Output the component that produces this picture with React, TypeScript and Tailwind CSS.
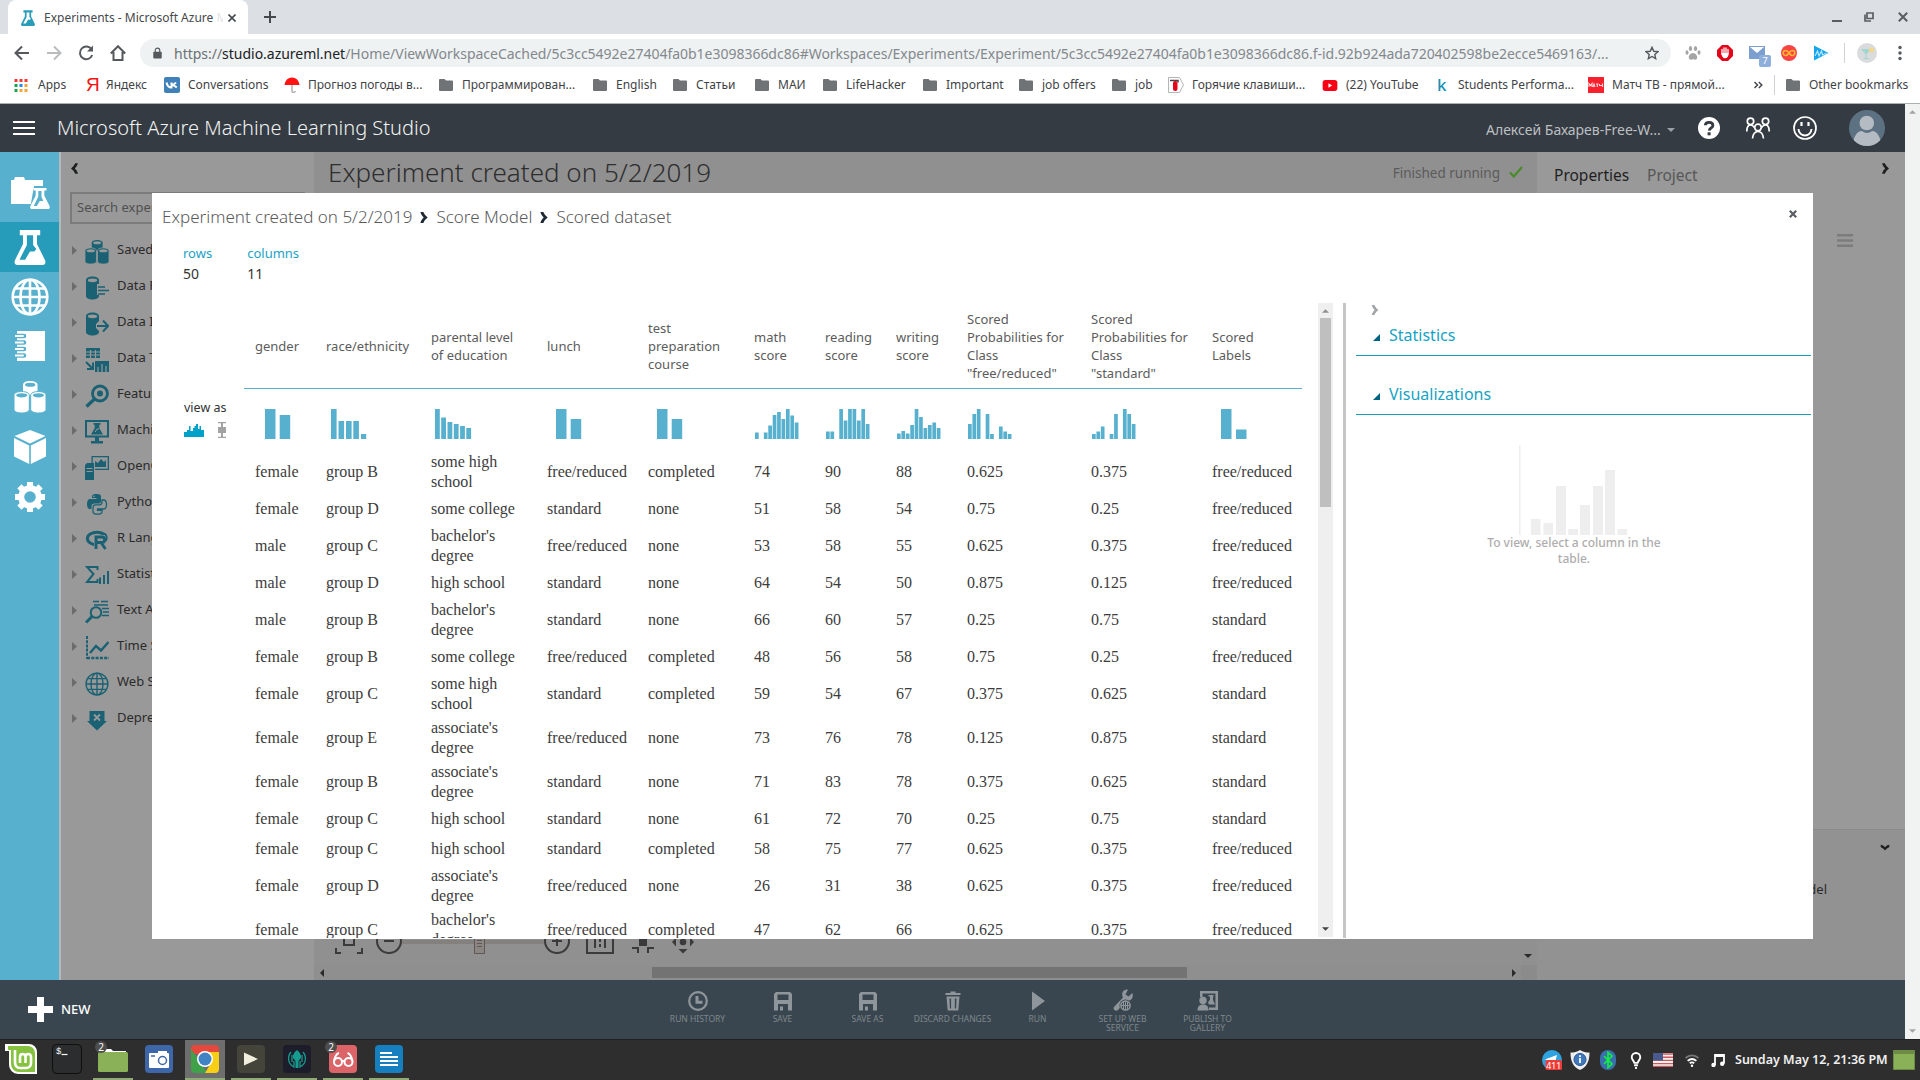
import type { ReactNode } from 'react';

const UI = "font-['Noto_Sans','Open_Sans',sans-serif]";

type P = { className?: string };

/* ---------- shared glyphs ---------- */

const Flask = ({ className = '' }: P) => (
  <svg viewBox="0 0 32 36" className={className} fill="currentColor">
    <path
      fillRule="evenodd"
      d="M5.5 0h21v5.5h-3.300v9L31.500 31c1 2.600 0 5-2.600 5H3.100C.5 36-.5 33.600.5 31L8.800 14.500v-9H5.500zM12.800 5.500v10L5.200 30.500h5.800l5-8.500h4.500l2-2.500-3.300-4v-10z"
    />
  </svg>
);

const Folder = ({ className = '' }: P) => (
  <svg viewBox="0 0 14 12" className={className} fill="currentColor">
    <path d="M1 0h4.500L7 1.500h6a1 1 0 0 1 1 1V11a1 1 0 0 1-1 1H1a1 1 0 0 1-1-1V1a1 1 0 0 1 1-1z" />
  </svg>
);

const Globe = ({ className = '', sw = 2.4 }: P & { sw?: number }) => (
  <svg viewBox="0 0 38 38" className={className} fill="none" stroke="currentColor" strokeWidth={sw}>
    <circle cx="19" cy="19" r="17.300" />
    <ellipse cx="19" cy="19" rx="9.500" ry="17.300" />
    <path d="M19 2v34M2 19h34M5 10.500h28M5 27.500h28" />
  </svg>
);

const Cylinders = ({ className = '', gap }: P & { gap: string }) => (
  <svg viewBox="0 0 32 32" className={className} fill="currentColor">
    <path d="M9 3.500C9 1.600 12 0 16 0s7.500 1.600 7.500 3.500V15H9z" />
    <ellipse cx="16.200" cy="3.800" rx="5.200" ry="2" fill={gap} />
    <path d="M0 14c0-2 3.500-3.500 7.700-3.500s7.600 1.500 7.600 3.500v14.500c0 2-3.400 3.500-7.600 3.500S0 30.500 0 28.500z" stroke={gap} strokeWidth="1" />
    <path d="M16.700 14c0-2 3.500-3.500 7.700-3.500S32 12 32 14v14.500c0 2-3.400 3.500-7.600 3.500s-7.700-1.500-7.700-3.500z" stroke={gap} strokeWidth="1" />
    <ellipse cx="7.700" cy="14.300" rx="5.600" ry="2.100" fill={gap} />
    <ellipse cx="24.400" cy="14.300" rx="5.600" ry="2.100" fill={gap} />
  </svg>
);

const Angle = ({ className = '' }: P) => (
  <svg viewBox="0 0 8 12" className={className} fill="currentColor">
    <path d="M0 0h3.200Q5 4 8 6 5 8 3.200 12H0q1.200-4 3.600-6Q1.200 4 0 0z" />
  </svg>
);

/* ---------- browser chrome ---------- */

const TabStrip = () => (
  <div className="flex h-[34px] shrink-0 bg-[#dcdfe4] pl-2">
    <div className="flex w-[240px] items-center rounded-t-lg bg-white pt-px">
      <Flask className="ml-[13px] h-[16px] w-[14px] text-[#2a9db8]" />
      <div className="relative ml-[9px] w-[179px] overflow-hidden text-[12px] whitespace-nowrap text-[#45494d]">
        Experiments - Microsoft Azure <span className="text-[#e3e4e5]">M</span>
      </div>
      <svg viewBox="0 0 8 8" className="ml-[5px] h-2 w-2" stroke="#45494d" strokeWidth="1.600">
        <path d="M.5.5l7 7M7.500.5l-7 7" />
      </svg>
    </div>
    <svg viewBox="0 0 12 12" className="mt-[11px] ml-[16px] h-3 w-3" stroke="#45494d" strokeWidth="2">
      <path d="M6 0v12M0 6h12" />
    </svg>
    <div className="ml-auto flex items-center gap-[22px] pr-[12px]">
      <svg viewBox="0 0 10 10" className="h-[10px] w-[10px]" stroke="#5a5e62" strokeWidth="2">
        <path d="M0 9h10" />
      </svg>
      <svg viewBox="0 0 10 10" className="h-[10px] w-[10px]" fill="none" stroke="#5a5e62" strokeWidth="1.700">
        <path d="M3 1h6v5.500H3zM1 2.500V9h6" />
      </svg>
      <svg viewBox="0 0 10 10" className="ml-[2px] h-[10px] w-[10px]" stroke="#5a5e62" strokeWidth="2">
        <path d="M.8.8l8.400 8.400M9.200.8L.8 9.200" />
      </svg>
    </div>
  </div>
);

const AddressBar = () => (
  <div className="flex h-[38px] shrink-0 items-center bg-white text-[#5f6368]">
    <svg viewBox="0 0 16 16" className="ml-[14px] h-4 w-4" fill="none" stroke="#55595d" strokeWidth="2">
      <path d="M15 8H2M8 1.500L1.500 8 8 14.500" />
    </svg>
    <svg viewBox="0 0 16 16" className="ml-[16px] h-4 w-4" fill="none" stroke="#b9bbbd" strokeWidth="2">
      <path d="M1 8h13M8 1.500L14.500 8 8 14.500" />
    </svg>
    <svg viewBox="0 0 16 16" className="ml-[16px] h-4 w-4" fill="none" stroke="#55595d" strokeWidth="2">
      <path d="M13.600 4.500A6.300 6.300 0 1 0 14.200 10" />
      <path d="M15 0.500v6H9z" fill="#55595d" stroke="none" />
    </svg>
    <svg viewBox="0 0 16 16" className="ml-[16px] h-4 w-4" fill="none" stroke="#55595d" strokeWidth="2">
      <path d="M.8 8.500L8 1.200l7.200 7.300M3.500 7v8h9V7" />
    </svg>
    <div className="ml-[14px] flex h-7 w-[1531px] items-center rounded-full bg-[#eef2f3] pl-[13px]">
      <svg viewBox="0 0 10 12" className="h-[12px] w-[9px]">
        <path d="M2.500 5V3a2.500 2.500 0 0 1 5 0v2" fill="none" stroke="#55595d" strokeWidth="1.300" />
        <rect x=".3" y="4.500" width="9.400" height="7.500" rx="1" fill="#55595d" />
      </svg>
      <div className="ml-[12px] w-[1458px] text-[14px] tracking-[-0.02px] whitespace-nowrap text-[#84888c]">
        <span className="text-[#6c7074]">https://</span>
        <span className="text-[#202124]">studio.azureml.net</span>
        /Home/ViewWorkspaceCached/5c3cc5492e27404fa0b1e3098366dc86#Workspaces/Experiments/Experiment/5c3cc5492e27404fa0b1e3098366dc86.f-id.92b924ada720402598be2ecce5469163/...
      </div>
      <svg viewBox="0 0 16 16" className="ml-[13px] h-[14px] w-[14px]" fill="none" stroke="#55595d" strokeWidth="1.600">
        <path d="M8 1.500l2 4.500 4.800.5-3.600 3.200 1 4.800L8 12l-4.200 2.500 1-4.800L1.200 6.500 6 6z" />
      </svg>
    </div>
    <svg viewBox="0 0 16 16" className="ml-[14px] h-4 w-4" fill="#a5a5a5">
      <path d="M8 8c2.500 0 5 3 4 5.500-1 2-2.500.8-4 .8s-3 1.200-4-.8C3 11 5.500 8 8 8z" />
      <ellipse cx="5.500" cy="3.500" rx="1.700" ry="2.600" />
      <ellipse cx="10.500" cy="3.500" rx="1.700" ry="2.600" />
      <ellipse cx="2" cy="7.500" rx="1.500" ry="2.200" />
      <ellipse cx="14" cy="7.500" rx="1.500" ry="2.200" />
    </svg>
    <svg viewBox="0 0 16 16" className="ml-[16px] h-4 w-4">
      <path d="M5 0h6l5 5v6l-5 5H5l-5-5V5z" fill="#e3061b" />
      <path d="M5 4.500v5M7 3v6M9 3v6M11 4.500V9" stroke="#fff" strokeWidth="1.300" strokeLinecap="round" />
      <path d="M4.400 8h7.200c.2 3.500-1.400 5.300-3.600 5.300S4.600 11 4.400 8z" fill="#fff" />
    </svg>
    <div className="relative ml-[16px] h-4 w-[22px]">
      <svg viewBox="0 0 16 13" className="mt-px h-[13px] w-4">
        <rect width="16" height="13" fill="#7d9fd0" />
        <path d="M1 1l7 6 7-6" fill="#fff" />
      </svg>
      <div className="absolute top-[10px] left-[10px] flex h-[12px] w-[12px] items-center justify-center rounded-[2px] bg-[#8eaedb] text-[9px] text-white">7</div>
    </div>
    <svg viewBox="0 0 16 16" className="ml-[10px] h-4 w-4">
      <circle cx="8" cy="8" r="8" fill="#fb4245" />
      <path d="M8 8C6.500 5.500 5.500 5.500 4.700 5.500a2.500 2.500 0 0 0 0 5C6 10.500 7 9.500 8 8s2-2.500 3.300-2.500a2.500 2.500 0 0 1 0 5C10 10.500 9 9.500 8 8z" fill="none" stroke="#ffb92e" strokeWidth="1.600" />
    </svg>
    <svg viewBox="0 0 16 16" className="ml-[16px] h-4 w-4">
      <path d="M1 0.500L15.500 8 1 15.500z" fill="#14a5ee" />
      <path d="M2 11l2.500-5 1.500 5 2.500-5 1 4 4-2" fill="none" stroke="#b8e6ff" strokeWidth="1.200" />
    </svg>
    <div className="ml-[15px] h-5 w-px bg-[#cfd1d3]" />
    <svg viewBox="0 0 20 20" className="ml-[12px] h-5 w-5">
      <circle cx="10" cy="10" r="10" fill="#dadbdc" />
      <path d="M4 6h10l-4.500 5v4h2v1h-5v-1h2v-4z" fill="#9fd6cf" />
      <circle cx="14.500" cy="7" r="2.500" fill="#f3d78a" />
    </svg>
    <svg viewBox="0 0 4 16" className="ml-[21px] h-4 w-[4px]" fill="#55595d">
      <circle cx="2" cy="2.500" r="1.700" />
      <circle cx="2" cy="8" r="1.700" />
      <circle cx="2" cy="13.500" r="1.700" />
    </svg>
  </div>
);

const folderIcon = <Folder className="ml-px h-3 w-[14px] text-[#6f7376]" />;

const BOOKMARKS: { label: string; w: string; icon: ReactNode }[] = [
  {
    label: 'Apps',
    w: 'w-[68px]',
    icon: (
      <svg viewBox="0 0 13 13" className="h-[13px] w-[14px]">
        <path d="M0 0h3v3H0zM5 0h3v3H5zM10 0h3v3h-3z" fill="#f03a3a" />
        <path d="M0 5h3v3H0z" fill="#1ea04c" />
        <path d="M5 5h3v3H5z" fill="#2a86e8" />
        <path d="M10 5h3v3h-3z" fill="#f2a33a" />
        <path d="M0 10h3v3H0z" fill="#1ea04c" />
        <path d="M5 10h3v3H5zM10 10h3v3h-3z" fill="#f2a33a" />
      </svg>
    ),
  },
  {
    label: 'Яндекс',
    w: 'w-[82px]',
    icon: <span className="pl-1 font-['Liberation_Sans'] text-[19px] leading-4 text-[#f01414]">Я</span>,
  },
  {
    label: 'Conversations',
    w: 'w-[120px]',
    icon: (
      <svg viewBox="0 0 16 16" className="h-4 w-4">
        <rect width="16" height="16" rx="2" fill="#3f81b8" />
        <path d="M2.500 5.500c.5 2.500 2 5 5 5V5.500M7.500 8c2 0 3.300-1 4.500-2.500M7.500 8c2.300 0 3.800 1 5.300 2.500" fill="none" stroke="#fff" strokeWidth="2" />
      </svg>
    ),
  },
  {
    label: 'Прогноз погоды в...',
    w: 'w-[154px]',
    icon: (
      <svg viewBox="0 0 16 16" className="h-4 w-4">
        <path d="M8 8v6a1.500 1.500 0 0 0 3 0" fill="none" stroke="#b5b5b5" strokeWidth="1.600" />
        <path d="M.5 8C1 3.500 4 .5 8 .5s7 3 7.500 7.500z" fill="#ff1212" />
      </svg>
    ),
  },
  { label: 'Программирован...', w: 'w-[154px]', icon: folderIcon },
  { label: 'English', w: 'w-[80px]', icon: folderIcon },
  { label: 'Статьи', w: 'w-[82px]', icon: folderIcon },
  { label: 'МАИ', w: 'w-[68px]', icon: folderIcon },
  { label: 'LifeHacker', w: 'w-[100px]', icon: folderIcon },
  { label: 'Important', w: 'w-[96px]', icon: folderIcon },
  { label: 'job offers', w: 'w-[93px]', icon: folderIcon },
  { label: 'job', w: 'w-[57px]', icon: folderIcon },
  {
    label: 'Горячие клавиши...',
    w: 'w-[154px]',
    icon: (
      <svg viewBox="0 0 16 16" className="h-4 w-4">
        <path d="M.5.5h11l4 7.500-4 7.500H.5z" fill="#fff" stroke="#b5b5b5" />
        <path d="M2 3.500h8v2" fill="none" stroke="#444" strokeWidth="1.500" />
        <rect x="5" y="4" width="4.500" height="10" rx="2" fill="#e3061b" />
      </svg>
    ),
  },
  {
    label: '(22) YouTube',
    w: 'w-[112px]',
    icon: (
      <svg viewBox="0 0 16 12" className="h-[11px] w-4">
        <rect width="16" height="12" rx="3" fill="#f80016" />
        <path d="M6.300 3.500v5l4-2.500z" fill="#fff" />
      </svg>
    ),
  },
  {
    label: 'Students Performa...',
    w: 'w-[154px]',
    icon: <span className="pl-[3px] text-[17px] leading-4 font-medium text-[#1791b5]">k</span>,
  },
  {
    label: 'Матч ТВ - прямой...',
    w: 'w-[166px]',
    icon: (
      <svg viewBox="0 0 16 16" className="h-4 w-4">
        <rect width="16" height="16" fill="#f8202c" />
        <path d="M1 10V6.500l1.500 2 1.500-2V10M5 10l1-3 1 3M8 7h2.500M9.300 7v3M11.500 7v1.500h3M14.500 6.500V10" fill="none" stroke="#ffd9db" strokeWidth="1.100" />
      </svg>
    ),
  },
];

const BookmarkBar = () => (
  <div className="flex h-[32px] shrink-0 items-center border-b border-[#a9b0ad] bg-white pb-[5px] pl-[14px] text-[12px] whitespace-nowrap text-[#3f4347]">
    {BOOKMARKS.map((b) => (
      <div key={b.label} className={`flex shrink-0 items-center ${b.w}`}>
        <div className="flex w-6 shrink-0 items-center">{b.icon}</div>
        {b.label}
      </div>
    ))}
    <svg viewBox="0 0 9 7" className="h-[8px] w-[9px] shrink-0" fill="none" stroke="#45494d" strokeWidth="1.500">
      <path d="M.5.5l3 3-3 3M4.800.5l3 3-3 3" />
    </svg>
    <div className="ml-[11px] h-[20px] w-px shrink-0 bg-[#cfd1d3]" />
    <div className="ml-[10px] flex items-center">
      <div className="flex w-6 shrink-0 items-center">{folderIcon}</div>
      Other bookmarks
    </div>
  </div>
);

/* ---------- studio header ---------- */

const StudioHeader = () => (
  <header className="flex h-12 shrink-0 items-center bg-[#343b42]">
    <svg viewBox="0 0 22 14" className="ml-[13px] h-[14px] w-[22px]" stroke="#fff" strokeWidth="2">
      <path d="M0 1h22M0 7h22M0 13h22" />
    </svg>
    <div className="ml-[22px] pb-[1px] text-[20px] font-light whitespace-nowrap text-[#f1f2f3]">Microsoft Azure Machine Learning Studio</div>
    <div className="mt-[3px] ml-auto w-[181px] text-[14px] whitespace-nowrap text-[#bcbfc1]">Алексей Бахарев-Free-W...</div>
    <svg viewBox="0 0 8 4" className="mt-[3px] h-1 w-2" fill="#9b9fa3">
      <path d="M0 0h8L4 4z" />
    </svg>
    <svg viewBox="0 0 22 22" className="ml-[23px] h-[22px] w-[22px]">
      <circle cx="11" cy="11" r="11" fill="#fff" />
      <path d="M7.300 8.300c.2-4 7.600-4 7.600.1 0 2.500-3.400 2.600-3.700 5.300" fill="none" stroke="#343b42" strokeWidth="2.800" />
      <rect x="9.600" y="15.300" width="3" height="3" fill="#343b42" />
    </svg>
    <svg viewBox="0 0 24 22" className="ml-[26px] h-[22px] w-[24px]" fill="none" stroke="#fff" strokeWidth="1.700">
      <circle cx="4.500" cy="4.300" r="3.200" />
      <circle cx="19.500" cy="4.300" r="3.200" />
      <circle cx="12" cy="10.500" r="3.300" />
      <path d="M.8 14.500c0-4 1.500-6.500 3.700-6.500 2 0 3 1.200 4 2.500M23.200 14.500c0-4-1.500-6.500-3.700-6.500-2 0-3 1.200-4 2.500M6.500 21.500c.5-4.500 2.500-7 5.500-7s5 2.500 5.500 7" />
    </svg>
    <svg viewBox="0 0 24 24" className="ml-[23px] h-6 w-6" fill="none" stroke="#fff" strokeWidth="1.700">
      <circle cx="12" cy="12" r="11" />
      <path d="M5.500 13c.5 8.500 12.500 8.500 13 0" strokeWidth="2" />
      <path d="M8.500 6v4M15.500 6v4" strokeWidth="2.200" />
    </svg>
    <svg viewBox="0 0 36 36" className="mr-[20px] ml-[32px] h-9 w-9">
      <defs>
        <clipPath id="avatar">
          <circle cx="18" cy="18" r="18" />
        </clipPath>
      </defs>
      <g clipPath="url(#avatar)">
        <rect width="36" height="36" fill="#5c7182" />
        <circle cx="17.800" cy="13" r="7.300" fill="#b4bbc2" />
        <path d="M4 36c0-9 4-15 9-15 3 2.600 7 2.600 10 0 5 0 9 6 9 15z" fill="#b4bbc2" />
      </g>
    </svg>
  </header>
);

/* ---------- navigation rail ---------- */

const Rail = () => (
  <nav className="flex w-[59px] shrink-0 flex-col bg-[#57b1ce] pt-[20px] text-white">
    {[
      <svg key="p" viewBox="0 0 40 32" className="mt-[-8px] h-8 w-10" fill="#fff">
        <path d="M1 3h3l1-3h9l1 3h18v24H1z" />
        <path d="M24 9h14v6l-1 3 4 9-1 5H20z" fill="#57b1ce" />
        <path fillRule="evenodd" d="M23.500 11h13v2.500h-2.200v5L39.500 29c.6 1.700 0 3-1.600 3H22c-1.600 0-2.200-1.300-1.600-3l5.300-10.500v-5h-2.200zm4.800 3v5.500l-4.500 9.500h3l3-5h3.500l-1.800-4V14z" />
      </svg>,
      <Flask key="e" className="h-[35px] w-8" />,
      <Globe key="w" className="h-[38px] w-[38px]" sw={2.6} />,
      <svg key="n" viewBox="0 0 30 30" className="mb-[2px] h-[30px] w-[30px]">
        <path d="M2 0h28v30H2z" fill="#fff" />
        <path d="M0 5h9M0 11.500h9M0 18h9M0 24.500h9" stroke="#57b1ce" strokeWidth="4.600" strokeLinecap="round" />
        <path d="M0 5h8M0 11.500h8M0 18h8M0 24.500h8" stroke="#fff" strokeWidth="1.900" strokeLinecap="round" />
      </svg>,
      <Cylinders key="d" className="h-[34px] w-[32px]" gap="#57b1ce" />,
      <svg key="m" viewBox="0 0 32 34" className="h-[34px] w-8" fill="#fff">
        <path d="M16 0l15.500 6L16 13.500.5 6zM0 8l15.200 7.500V34L0 26.500zM32 8l-15.200 7.500V34L32 26.500z" />
      </svg>,
      <svg key="s" viewBox="0 0 30 30" className="h-[30px] w-[30px]">
        <circle cx="15" cy="15" r="8.800" fill="none" stroke="#fff" strokeWidth="6" />
        <g stroke="#fff" strokeWidth="6">
          <path d="M15 0v5M15 25v5M0 15h5M25 15h5M4.400 4.400l3.500 3.500M22.100 22.100l3.500 3.500M4.400 25.600l3.500-3.500M22.100 7.900l3.500-3.500" />
        </g>
      </svg>,
    ].map((icon, i) => (
      <div key={i} className={`flex h-[50px] items-center justify-center ${i === 1 ? 'bg-[#279cba]' : ''}`}>
        {icon}
      </div>
    ))}
  </nav>
);

/* ---------- module palette ---------- */

const G = '#999999';
const box = 'h-6 w-6';

const MODULES: { label: string; icon: ReactNode }[] = [
  { label: 'Saved Datasets', icon: <Cylinders className={box} gap={G} /> },
  {
    label: 'Data Format Conversions',
    icon: (
      <svg viewBox="0 0 24 24" className={box} fill="currentColor">
        <path d="M1 4c0-2 3-3.500 6.500-3.500S14 2 14 4v4h-2v11h2v1c0 2-3 3.500-6.500 3.500S1 22 1 20z" />
        <ellipse cx="7.500" cy="4.300" rx="4.700" ry="1.900" fill={G} />
        <path d="M13 11h7M13 14.500h11M13 18h7" stroke="currentColor" strokeWidth="1.700" />
      </svg>
    ),
  },
  {
    label: 'Data Input and Output',
    icon: (
      <svg viewBox="0 0 24 24" className={box} fill="currentColor">
        <path d="M1 4c0-2 3-3.500 6.500-3.500S14 2 14 4v5l-3 3v4l3 3v1c0 2-3 3.500-6.500 3.500S1 22 1 20z" />
        <ellipse cx="7.500" cy="4.300" rx="4.700" ry="1.900" fill={G} />
        <path d="M12 14h11M18 8.500l5.200 5.500-5.200 5.500" fill="none" stroke="currentColor" strokeWidth="2" />
      </svg>
    ),
  },
  {
    label: 'Data Transformation',
    icon: (
      <svg viewBox="0 0 24 24" className={box} fill="currentColor">
        <path d="M1 0h14v10H1zM10 13h14v11H10z" />
        <path d="M1 4h14M1 7h14M5.500 2v8M10.500 2v8M13 24v-5M17 24v-8M21 24v-6" stroke={G} strokeWidth="1.200" />
        <path d="M1 14l6.500 6.500M8 14.500V21H2" fill="none" stroke="currentColor" strokeWidth="2" />
      </svg>
    ),
  },
  {
    label: 'Feature Selection',
    icon: (
      <svg viewBox="0 0 24 24" className={box} fill="none" stroke="currentColor">
        <circle cx="15" cy="9.500" r="7.500" strokeWidth="2.800" />
        <circle cx="15" cy="9.500" r="3" fill="currentColor" stroke="none" />
        <path d="M9.500 15L1.500 22.500" strokeWidth="3.400" />
      </svg>
    ),
  },
  {
    label: 'Machine Learning',
    icon: (
      <svg viewBox="0 0 24 24" className={box} fill="currentColor">
        <path d="M0 0h24v17.500H14V21h4v2.500H6V21h4v-3.500H0zM2 2v13.500h20V2z" fillRule="evenodd" />
        <path d="M8.500 3h7v1.800h-1.200V8l3.700 6.500H6L9.700 8V4.800H8.500z" />
        <path d="M10 12l2-3h2" stroke={G} fill="none" />
      </svg>
    ),
  },
  {
    label: 'OpenCV Library Modules',
    icon: (
      <svg viewBox="0 0 24 24" className={box} fill="currentColor">
        <path d="M6.500 0H24v14H10v-1.300h12.700V1.300H7.800V7H6.500z" />
        <path d="M10 11V5l3 2 3-4 3 3 2-2v7z" />
        <path d="M0 9l2-2h7v17H0z" />
        <path d="M1.500 12.500h6M1.500 15.500h6" stroke={G} />
      </svg>
    ),
  },
  {
    label: 'Python Language Modules',
    icon: (
      <svg viewBox="0 0 24 24" className={box} fill="currentColor">
        <path d="M11.500 2c4 0 4.500 1 4.500 3v4c0 2-1 2.500-2.500 2.500h-4c-2 0-3 1-3 3V17H5c-2 0-3-2-3-5s1-5 3-5h6.500V6H7V4.500C7 2.500 8.500 2 11.500 2z" />
        <circle cx="9" cy="4.200" r=".8" fill={G} />
        <path d="M17 8h1.500c2 0 3 2 3 4.500s-1 4.500-3 4.500H12.500v1.300H17v1.200c0 2-1.500 2.700-4.500 2.700S8 21.500 8 19.500v-4c0-2 1-2.700 2.500-2.700h4c1.500 0 2.500-1 2.500-2.500z" fill="none" stroke="currentColor" strokeWidth="1.300" />
      </svg>
    ),
  },
  {
    label: 'R Language Modules',
    icon: (
      <svg viewBox="0 0 24 24" className={box}>
        <ellipse cx="12" cy="10.500" rx="9.600" ry="6.300" fill="none" stroke="currentColor" strokeWidth="3" />
        <path d="M9 7h14v15H9z" fill={G} />
        <path d="M11 21V9h6c3.500 0 3.500 5.500 0 5.500h-5M16 14.500l4.500 6.500" fill="none" stroke="currentColor" strokeWidth="2.900" />
        <path d="M20 6c2 1.500 2.500 5 .5 7" fill="none" stroke="currentColor" strokeWidth="1.800" />
      </svg>
    ),
  },
  {
    label: 'Statistical Functions',
    icon: (
      <svg viewBox="0 0 24 24" className={box} fill="none" stroke="currentColor" strokeWidth="2">
        <path d="M12.500 6V3H2l6.500 7L2 18h10.500v-3" />
        <path d="M15 20v-6.500M19 20v-9M23 20V7" />
      </svg>
    ),
  },
  {
    label: 'Text Analytics',
    icon: (
      <svg viewBox="0 0 24 24" className={box} fill="none" stroke="currentColor">
        <path d="M8 1.500h6M16 1.500h7M9 5h14M17 8.500h7M18 12h6M17 15.500h7" strokeWidth="1.600" />
        <circle cx="11" cy="12.500" r="5.300" strokeWidth="2" />
        <path d="M7 16.500L1 22.500" strokeWidth="3" />
      </svg>
    ),
  },
  {
    label: 'Time Series',
    icon: (
      <svg viewBox="0 0 24 24" className={box} fill="none" stroke="currentColor" strokeWidth="2">
        <path d="M2 0v23" strokeDasharray="3 1.200" />
        <path d="M2 22h22" strokeDasharray="3 1.300" strokeWidth="2.600" />
        <path d="M5 17l6-7 5 4.500L23.500 6" strokeWidth="2.400" />
      </svg>
    ),
  },
  { label: 'Web Service', icon: <Globe className={box} sw={2.2} /> },
  {
    label: 'Deprecated',
    icon: (
      <svg viewBox="0 0 24 24" className={box} fill="currentColor">
        <path d="M4.500 3h15v10h2.500L12 22.500 2 13h2.500z" />
        <path d="M9 6.500l6 6M15 6.500l-6 6" stroke={G} strokeWidth="1.800" />
      </svg>
    ),
  },
];

const Palette = () => (
  <aside className="flex w-[255px] shrink-0 flex-col border-l-2 border-[#b5b9bb] bg-[#999999]">
    <Angle className="mt-[11px] ml-[10px] h-[11px] w-[7px] rotate-180 text-[#1d1f21]" />
    <div className="mt-[18px] ml-[9px] flex h-[32px] w-[235px] items-center border-2 border-[#7b7b7b] pl-[5px] text-[13px] whitespace-nowrap text-[#505050]">
      Search experiment items
    </div>
    <div className="mt-[8px] text-[13px] text-[#2b2b2b]">
      {MODULES.map((m) => (
        <div key={m.label} className="flex h-9 items-center whitespace-nowrap">
          <svg viewBox="0 0 5 9" className="ml-[11px] h-[9px] w-[5px]" fill="#6c6c6c">
            <path d="M0 0l5 4.500L0 9z" />
          </svg>
          <div className="mt-[3px] ml-[8px] text-[#1a6273]">{m.icon}</div>
          <span className="ml-[8px]">{m.label}</span>
        </div>
      ))}
    </div>
  </aside>
);

/* ---------- experiment canvas ---------- */

const Canvas = () => (
  <main className="flex w-[1223px] shrink-0 flex-col bg-[#909090]">
    <div className="flex items-start pt-[1px] pl-[14px]">
      <h1 className="text-[26px] leading-[38px] font-light whitespace-nowrap text-[#2e2e2e]">Experiment created on 5/2/2019</h1>
      <span className="mt-[11px] ml-auto text-[13.5px] leading-[18px] text-[#5b5b5b]">Finished running</span>
      <svg viewBox="0 0 14 12" className="mt-[13px] mr-[14px] ml-[9px] h-3 w-[14px]" fill="none" stroke="#4a8a2a" strokeWidth="2.200">
        <path d="M1 6.500L4.800 10.500 13 1" />
      </svg>
    </div>
    <div className="mt-auto flex h-[28px] items-start pl-[21px] text-[#3a3a3a]">
      <svg viewBox="0 0 28 26" className="h-[26px] w-7" fill="none" stroke="currentColor" strokeWidth="2">
        <path d="M9 9h10v8H9zM1 20v5h5M27 20v5h-5" />
      </svg>
      <svg viewBox="0 0 26 26" className="ml-[13px] h-[26px] w-[26px]" fill="none" stroke="currentColor" strokeWidth="2">
        <circle cx="13" cy="13" r="12" />
        <path d="M8 13h10" />
      </svg>
      <div className="mt-[12px] h-[4px] w-[72px] bg-[#84807d]" />
      <svg viewBox="0 0 11 26" className="h-[26px] w-[11px]" fill="#8b8683" stroke="#5d5755">
        <path d="M.5.5h10v25H.5zM3 12.500h5M3 15.500h5M3 18.500h5" />
      </svg>
      <div className="mt-[12px] h-[4px] w-[59px] bg-[#84807d]" />
      <svg viewBox="0 0 26 26" className="h-[26px] w-[26px]" fill="none" stroke="currentColor" strokeWidth="2">
        <circle cx="13" cy="13" r="12" />
        <path d="M8 13h10M13 8v10" />
      </svg>
      <svg viewBox="0 0 28 26" className="ml-[16px] h-[26px] w-7" fill="none" stroke="currentColor" strokeWidth="2">
        <path d="M1 1h26v24H1zM9 8v12M19 8v12M14 11v3M14 16v3" />
      </svg>
      <svg viewBox="0 0 22 26" className="ml-[18px] h-[26px] w-[22px]" fill="none" stroke="currentColor" strokeWidth="2">
        <path d="M7 8h8v10H7z" fill="currentColor" stroke="none" />
        <path d="M0 20h6v5M22 20h-6v5" />
      </svg>
      <svg viewBox="0 0 22 26" className="ml-[18px] h-[26px] w-[22px]" fill="currentColor">
        <circle cx="11" cy="14" r="3.300" />
        <path d="M4 9.500v9L0 14zM18 9.500v9l4-4.500zM6.500 21h9L11 25.500z" />
      </svg>
      <svg viewBox="0 0 8 4" className="mt-[26px] mr-[5px] ml-auto h-1 w-2" fill="#2a2a2a">
        <path d="M0 0h8L4 4z" />
      </svg>
    </div>
    <div className="mt-[9px] flex h-[15px] shrink-0 items-center bg-[#8f8f8f]">
      <svg viewBox="0 0 4 8" className="ml-[6px] h-2 w-1" fill="#2a2a2a">
        <path d="M4 0v8L0 4z" />
      </svg>
      <div className="ml-[328px] h-[11px] w-[535px] bg-[#737373]" />
      <svg viewBox="0 0 4 8" className="ml-auto h-2 w-1" fill="#2a2a2a">
        <path d="M0 0v8l4-4z" />
      </svg>
      <div className="ml-[5px] h-full w-[16px] bg-[#8b8b8b]" />
    </div>
  </main>
);

const Properties = () => (
  <aside className="flex flex-1 flex-col bg-[#999999]">
    <div className="flex items-start pt-[11px] pl-[17px] text-[15.5px] leading-[24px]">
      <span className="w-[93px] text-[#1f1f1f]">Properties</span>
      <span className="text-[#575757]">Project</span>
      <Angle className="mr-[16px] ml-auto h-[11px] w-[7px] text-[#1d1f21]" />
    </div>
    <svg viewBox="0 0 16 13" className="mt-[47px] mr-[52px] ml-auto h-[13px] w-4" stroke="#7c7c7c" strokeWidth="2.600">
      <path d="M0 1.300h16M0 6.500h16M0 11.700h16" />
    </svg>
    <div className="mt-auto flex h-[151px] flex-col border-t border-[#8a8a8a] bg-[#929292]">
      <Angle className="mt-[13px] mr-[17px] ml-auto h-[9px] w-[6px] rotate-90 text-[#1d1f21]" />
      <span className="mt-[28px] mr-[78px] text-right text-[13px] leading-[18px] text-[#2b2b2b]">Score Model</span>
    </div>
  </aside>
);

/* ---------- dataset dialog ---------- */

type Bar = [number, number, number];
const run = (hs: number[]): Bar[] => hs.map((h, i) => [i * 4.42, 3.700, h]);

const COLUMNS: { name: string[]; w: string; off: string; bars: Bar[] }[] = [
  { name: ['gender'], w: 'w-[71px]', off: 'ml-[21px]', bars: [[0, 10.5, 30], [14.7, 10.5, 24]] },
  { name: ['race/ethnicity'], w: 'w-[105px]', off: 'ml-[16px]', bars: [[0, 5.6, 30], [7.5, 5.6, 18], [15, 5.6, 18], [22.3, 5.6, 18], [30, 5.2, 5]] },
  { name: ['parental level', 'of education'], w: 'w-[116px]', off: 'ml-[15px]', bars: [[0, 4.8, 30], [6.2, 4.8, 21.5], [12.5, 4.8, 17], [18.8, 4.8, 15], [25.1, 4.8, 13], [31.3, 4.8, 11]] },
  { name: ['lunch'], w: 'w-[101px]', off: 'ml-[20px]', bars: [[0, 10.5, 30], [14.7, 10.5, 20]] },
  { name: ['test', 'preparation', 'course'], w: 'w-[106px]', off: 'ml-[20px]', bars: [[0, 10.5, 30], [14.7, 10.5, 20]] },
  { name: ['math', 'score'], w: 'w-[71px]', off: 'ml-[12px]', bars: run([6.5, 0, 6.5, 13.5, 24, 27, 20, 30, 23.5, 16.5]) },
  { name: ['reading', 'score'], w: 'w-[71px]', off: 'ml-[12px]', bars: run([7.5, 7.5, 0, 30, 18.5, 30, 30, 18.5, 30, 15]) },
  { name: ['writing', 'score'], w: 'w-[71px]', off: 'ml-[12px]', bars: run([5.5, 8, 5.5, 14, 30, 22, 11, 14, 16.5, 11]) },
  { name: ['Scored', 'Probabilities for', 'Class', '"free/reduced"'], w: 'w-[124px]', off: 'ml-[12px]', bars: run([15, 25, 30, 0, 25, 5, 0, 12.5, 7.5, 5]) },
  { name: ['Scored', 'Probabilities for', 'Class', '"standard"'], w: 'w-[121px]', off: 'ml-[12px]', bars: run([5, 7.5, 12.5, 0, 5, 25, 0, 30, 25, 15]) },
  { name: ['Scored', 'Labels'], w: 'w-[101px]', off: 'ml-[20px]', bars: [[0, 10.5, 30], [15, 10.5, 9.5]] },
];

const F = 'free/reduced';
const S = 'standard';
const ROWS: string[][] = [
  ['female', 'group B', 'some high|school', F, 'completed', '74', '90', '88', '0.625', '0.375', F],
  ['female', 'group D', 'some college', S, 'none', '51', '58', '54', '0.75', '0.25', F],
  ['male', 'group C', "bachelor's|degree", F, 'none', '53', '58', '55', '0.625', '0.375', F],
  ['male', 'group D', 'high school', S, 'none', '64', '54', '50', '0.875', '0.125', F],
  ['male', 'group B', "bachelor's|degree", S, 'none', '66', '60', '57', '0.25', '0.75', S],
  ['female', 'group B', 'some college', F, 'completed', '48', '56', '58', '0.75', '0.25', F],
  ['female', 'group C', 'some high|school', S, 'completed', '59', '54', '67', '0.375', '0.625', S],
  ['female', 'group E', "associate's|degree", F, 'none', '73', '76', '78', '0.125', '0.875', S],
  ['female', 'group B', "associate's|degree", S, 'none', '71', '83', '78', '0.375', '0.625', S],
  ['female', 'group C', 'high school', S, 'none', '61', '72', '70', '0.25', '0.75', S],
  ['female', 'group C', 'high school', S, 'completed', '58', '75', '77', '0.625', '0.375', F],
  ['female', 'group D', "associate's|degree", F, 'none', '26', '31', '38', '0.625', '0.375', F],
  ['female', 'group C', "bachelor's|degree", F, 'completed', '47', '62', '66', '0.625', '0.375', F],
];

const Histogram = ({ bars }: { bars: Bar[] }) => (
  <svg viewBox="0 0 46 30" className="h-[30px] w-[46px]" fill="#57b1ce">
    {bars.map(([x, w, h], i) => (
      <rect key={i} x={x} y={30 - h} width={w} height={h} />
    ))}
  </svg>
);

const DataTable = () => (
  <div className="w-[1058px] shrink-0">
    <div className="flex h-[86px] items-center border-b border-[#57b1ce] text-[13px] leading-[18px] text-[#5c5c5c]">
      {COLUMNS.map((c, i) => (
        <div key={i} className={`shrink-0 pl-[11px] whitespace-nowrap ${c.w}`}>
          {c.name.map((n) => (
            <div key={n}>{n}</div>
          ))}
        </div>
      ))}
    </div>
    <div className="flex h-[61px] pt-[20px]">
      {COLUMNS.map((c, i) => (
        <div key={i} className={`shrink-0 ${c.w}`}>
          <div className={c.off}>
            <Histogram bars={c.bars} />
          </div>
        </div>
      ))}
    </div>
    <div className="font-['Liberation_Serif',serif] text-[16px] leading-5 text-[#3c3c3c]">
      {ROWS.map((r, i) => (
        <div key={i} className={`flex items-center ${r[2].includes('|') ? 'h-11' : 'h-[30px]'}`}>
          {r.map((v, j) => (
            <div key={j} className={`shrink-0 pl-[11px] whitespace-nowrap ${COLUMNS[j].w}`}>
              {v.split('|').map((t) => (
                <div key={t}>{t}</div>
              ))}
            </div>
          ))}
        </div>
      ))}
    </div>
  </div>
);

const Section = ({ title }: { title: string }) => (
  <div className="flex h-[41px] items-center border-b-[1.500px] border-[#149dbb] pl-[17px] text-[16px] text-[#17a3c4]">
    <svg viewBox="0 0 7 7" className="mt-[4px] mr-[9px] h-[7px] w-[7px]" fill="#00637f">
      <path d="M7 0v7H0z" />
    </svg>
    {title}
  </div>
);

const Dialog = () => (
  <div className="absolute top-[193px] left-[152px] flex h-[746px] w-[1661px] flex-col overflow-hidden bg-white">
    <div className="flex h-[47px] shrink-0 items-center pl-[10px] text-[17px] font-light whitespace-nowrap text-[#5a5a5a]">
      Experiment created on 5/2/2019
      <Angle className="mx-[8px] mt-[2px] h-[11px] w-[8px] text-[#1d2a33]" />
      Score Model
      <Angle className="mx-[8px] mt-[2px] h-[11px] w-[8px] text-[#1d2a33]" />
      Scored dataset
      <svg viewBox="0 0 8 8" className="mr-[16px] mb-[6px] ml-auto h-2 w-2" stroke="#5a5e62" strokeWidth="2.200">
        <path d="M.8.8l6.400 6.400M7.200.8L.8 7.200" />
      </svg>
    </div>
    <div className="flex h-[63px] shrink-0 gap-[35px] pt-[3px] pl-[31px]">
      <div>
        <div className="text-[13px] leading-[20px] text-[#1ba3c6]">rows</div>
        <div className="text-[14px] leading-[22px] text-[#333]">50</div>
      </div>
      <div>
        <div className="text-[13px] leading-[20px] text-[#1ba3c6]">columns</div>
        <div className="text-[14px] leading-[22px] text-[#333]">11</div>
      </div>
    </div>
    <div className="flex min-h-0 flex-1">
      <div className="flex h-[635px] w-[1166px] shrink-0 overflow-hidden">
        <div className="w-[92px] shrink-0 pt-[96px] pl-[32px]">
          <div className="text-[12.500px] leading-[18px] whitespace-nowrap text-[#333]">view as</div>
          <div className="mt-[5px] flex items-center gap-[14px]">
            <svg viewBox="0 0 20 13" className="h-[13px] w-5" fill="#00a2c9">
              <path d="M0 13V8h3V6h2V2h1.500v5H9V4h1.500V2H12V0h2v5h1.500V2H17v4h3v7z" />
            </svg>
            <svg viewBox="0 0 8 16" className="h-4 w-2" fill="#a2a2a2">
              <path d="M0 0h8v1.300H5V5h3v6H5v3.700h3V16H0v-1.300h3V11H0V5h3V1.300H0z" />
            </svg>
          </div>
        </div>
        <DataTable />
      </div>
      <div className="flex h-[634px] w-[15px] shrink-0 flex-col items-center justify-between bg-[#efefef] py-[6px]">
        <svg viewBox="0 0 8 4" className="h-1 w-[7px] shrink-0" fill="#8f8f8f">
          <path d="M0 4h8L4 0z" />
        </svg>
        <div className="mt-[5px] mb-auto h-[189px] w-[11px] bg-[#bfbfbf]" />
        <svg viewBox="0 0 8 4" className="h-1 w-[7px] shrink-0" fill="#444">
          <path d="M0 0h8L4 4z" />
        </svg>
      </div>
      <div className="ml-[10px] h-[635px] w-[3px] shrink-0 bg-[#c6c6c6]" />
      <div className="ml-[10px] flex w-[455px] flex-col">
        <Angle className="mt-[2px] ml-[15px] h-[10px] w-[8px] shrink-0 text-[#a0a4a7]" />
        <Section title="Statistics" />
        <div className="h-[18px] shrink-0" />
        <Section title="Visualizations" />
        <svg viewBox="0 0 110 90" className="mt-[30px] ml-[163px] h-[90px] w-[110px] shrink-0" fill="#eeeeee">
          <path d="M0 0h1.500v90H0zM12 74h9.500v16H12zM24.500 78H34v12h-9.500zM37 41h10v49H37zM49.300 84H59v6h-9.700zM61 60h10v30H61zM74 41h10v49H74zM86 25h10v65H86zM98.500 84h9.500v6h-9.500z" />
        </svg>
        <div className="w-[436px] text-center text-[12px] leading-[16px] font-medium text-[#adadad]">
          To view, select a column in the
          <br />
          table.
        </div>
      </div>
    </div>
  </div>
);

/* ---------- command bar ---------- */

const COMMANDS: { label: string[]; icon: ReactNode }[] = [
  {
    label: ['RUN HISTORY'],
    icon: (
      <>
        <circle cx="12" cy="12" r="8.800" fill="none" stroke="currentColor" strokeWidth="2.200" />
        <path d="M11 7v6.200h5.500" fill="none" stroke="currentColor" strokeWidth="3" />
      </>
    ),
  },
  { label: ['SAVE'], icon: <path fillRule="evenodd" d="M5 3h14l2 2v16.500H3V5zM6.500 5.500v5.500h11V5.500zM7 15v6.500h10V15zM9 17.500h3v4H9z" /> },
  { label: ['SAVE AS'], icon: <path fillRule="evenodd" d="M5 3h14l2 2v16.500H3V5zM6.500 5.500v5.500h11V5.500zM7 15v6.500h10V15zM9 17.500h3v4H9z" /> },
  { label: ['DISCARD CHANGES'], icon: <path fillRule="evenodd" d="M9.500 2.500h5V4h5v2h-15V4h5zM5.500 7.500h13l-1.200 14H6.700zM8.500 9.500l.4 10h1.200v-10zM13.800 9.500v10h1.300l.4-10z" /> },
  { label: ['RUN'], icon: <path d="M6 2.500L19 12 6 21.500z" /> },
  {
    label: ['SET UP WEB', 'SERVICE'],
    icon: (
      <>
        <path d="M21.500 4l-4 3.500-3-2L17 .5c-5-.5-7 4-5 8L3 18c-1.500 2 1.500 5 4 3l8-9.500c4 1.500 8-2 6.500-7.500z" />
        <circle cx="14.500" cy="16.500" r="6" fill="#3a464f" />
        <circle cx="14.500" cy="16.500" r="4.600" fill="none" stroke="currentColor" strokeWidth="1.500" />
        <path d="M10 16.500h9M14.500 12v9M12.500 12.500v8M16.500 12.500v8" stroke="currentColor" />
      </>
    ),
  },
  {
    label: ['PUBLISH TO', 'GALLERY'],
    icon: (
      <>
        <path fillRule="evenodd" d="M4 2h18v19h-9v-2.500h6.500v-14h-13V8H4z" />
        <circle cx="7" cy="11.500" r="3.700" />
        <path d="M1.500 21.500c0-4 2-6 5.500-6s5.500 2 5.500 6z" />
        <path d="M12.500 6h5v1.500H17V11l2 4.500h-6l-1-2 2-3V7.500h-1.500z" />
      </>
    ),
  },
];

const CommandBar = () => (
  <div className="flex h-[59px] shrink-0 bg-[#3a464f]">
    <div className="flex w-[655px] items-center pl-[28px]">
      <svg viewBox="0 0 25 25" className="h-[25px] w-[25px]" stroke="#fff" strokeWidth="7">
        <path d="M12.500 0v25M0 12.500h25" />
      </svg>
      <span className="mt-px ml-[8px] text-[13px] font-medium text-white">NEW</span>
    </div>
    {COMMANDS.map((c) => (
      <div key={c.label[0]} className="flex w-[85px] shrink-0 flex-col items-center pt-[9px] text-[#8f969b]">
        <svg viewBox="0 0 24 24" className="h-6 w-6 shrink-0" fill="currentColor">
          {c.icon}
        </svg>
        <div className="mt-[1px] text-center text-[8.500px] leading-[9px] whitespace-nowrap text-[#7e868c]">
          {c.label.map((l) => (
            <div key={l}>{l}</div>
          ))}
        </div>
      </div>
    ))}
  </div>
);

/* ---------- desktop panel ---------- */

const Badge = () => (
  <div className="absolute top-[1px] left-[2px] flex h-[12px] w-[12px] items-center justify-center rounded-full bg-[#4d4d4d] text-[10px] text-white">2</div>
);

const APPS: { icon: ReactNode; open?: boolean; active?: boolean; badge?: boolean }[] = [
  {
    icon: (
      <svg viewBox="0 0 32 30" className="h-[30px] w-8">
        <path d="M0 0h24a8 8 0 0 1 8 8v22H13a9 9 0 0 1-9-9V7H0z" fill="#fff" />
        <path d="M3 2h20a7 7 0 0 1 7 7v19H14a8 8 0 0 1-8-8V6H3z" fill="#86c23f" />
        <path d="M10 6v12c0 4 2 6 5 6h6c3 0 5-2 5-5v-6c0-4-5.500-4-5.500 0 0-4-5.500-4-5.500 0v6M20.500 13v6" fill="none" stroke="#fff" strokeWidth="2.600" />
      </svg>
    ),
  },
  {
    icon: (
      <svg viewBox="0 0 30 30" className="h-[30px] w-[30px]">
        <rect x=".5" y=".5" width="29" height="29" rx="4" fill="#2b2d2e" stroke="#0e0e0e" />
        <text x="4" y="10" fontSize="9" fill="#fff" fontFamily="Liberation Mono, monospace">$</text>
        <path d="M9.500 10.500h6" stroke="#fff" strokeWidth="1.200" />
      </svg>
    ),
  },
  {
    open: true,
    badge: true,
    icon: (
      <svg viewBox="0 0 30 26" className="mt-[1px] h-[26px] w-[30px]">
        <path d="M1 8V3l2-1h10l2 2h13v4z" fill="#fff" />
        <rect y="5" width="30" height="20" rx="1.500" fill="#8bb158" />
      </svg>
    ),
  },
  {
    icon: (
      <svg viewBox="0 0 28 28" className="h-7 w-7">
        <rect width="28" height="28" rx="4" fill="#3d67a8" />
        <rect x="4" y="8" width="20" height="15" rx="1" fill="#fff" />
        <path d="M13 6h9v2h-9z" fill="#fff" />
        <path d="M6 11h4" stroke="#3d67a8" strokeWidth="1.500" />
        <circle cx="17.500" cy="15.500" r="4" fill="none" stroke="#3d67a8" strokeWidth="1.500" />
      </svg>
    ),
  },
  {
    open: true,
    active: true,
    icon: (
      <svg viewBox="0 0 28 28" className="h-7 w-7">
        <defs>
          <clipPath id="chromeTile">
            <rect width="28" height="28" rx="4" />
          </clipPath>
        </defs>
        <g clipPath="url(#chromeTile)">
          <path d="M0 0h28v9H0z" fill="#e5493d" />
          <path d="M0 4l10 14 6 10H0z" fill="#3fa14a" />
          <path d="M14 7h14v21H14l6-10z" fill="#f9cf16" />
        </g>
        <circle cx="14" cy="14" r="8" fill="#fff" />
        <circle cx="14" cy="14" r="6.500" fill="#3f83c4" />
      </svg>
    ),
  },
  {
    open: true,
    icon: (
      <svg viewBox="0 0 28 28" className="h-7 w-7">
        <rect width="28" height="28" rx="4" fill="#45443a" />
        <path d="M7 7.500L21 14 7 20.500z" fill="#f1eedd" />
      </svg>
    ),
  },
  {
    open: true,
    icon: (
      <svg viewBox="0 0 28 28" className="h-7 w-7">
        <rect width="28" height="28" rx="4" fill="#1c1c2b" />
        <path d="M14 5c3 2 4.500 5 4 8l-2.500 3v7h-3v-7L10 13c-.5-3 1-6 4-8z" fill="#169c8f" />
        <path d="M8 7c-4 5-3 12 3 15v-6M20 7c4 5 3 12-3 15v-6M9 10v7M19 10v7" fill="none" stroke="#169c8f" strokeWidth="1.300" />
      </svg>
    ),
  },
  {
    open: true,
    badge: true,
    icon: (
      <svg viewBox="0 0 28 28" className="h-7 w-7">
        <rect width="28" height="28" rx="4" fill="#dc6468" />
        <g fill="none" stroke="#fff" strokeWidth="2">
          <circle cx="9" cy="17" r="4" />
          <circle cx="19.500" cy="17" r="4" />
          <path d="M13 16h2.500M5 16c1-5 2-7 5-8M23.500 16c-1-5-2-7-5-8" />
        </g>
      </svg>
    ),
  },
  {
    open: true,
    icon: (
      <svg viewBox="0 0 28 28" className="h-7 w-7">
        <rect width="28" height="28" rx="4" fill="#167fc0" />
        <path d="M5 8h12M5 12h18M5 16h18M5 20h18" stroke="#fff" strokeWidth="2" />
      </svg>
    ),
  },
];

const Taskbar = () => (
  <div className="flex h-[41px] shrink-0 items-center border-t border-[#202020] bg-[#2e2e2e]">
    <div className="flex h-full gap-[6px] pl-[1px]">
      {APPS.map((a, i) => (
        <div
          key={i}
          className={`relative flex w-10 items-center justify-center border-b-2 ${a.open ? 'border-[#90aa78]' : 'border-transparent'} ${a.active ? 'bg-[#6e6e6e]' : ''}`}
        >
          {a.icon}
          {a.badge && <Badge />}
        </div>
      ))}
    </div>
    <div className="ml-auto flex items-center pr-[5px]">
      <svg viewBox="0 0 20 20" className="h-5 w-5">
        <circle cx="10" cy="10" r="10" fill="#2fa3df" />
        <path d="M3 9.500L15 5l-2 8z" fill="#fff" />
        <rect x="3.500" y="10" width="16.500" height="10" rx="1.500" fill="#ee3b37" />
        <text x="4" y="18.500" fontSize="9.500" fill="#fff" fontFamily="Noto Sans, sans-serif" textLength="15.500">411</text>
      </svg>
      <svg viewBox="0 0 20 20" className="ml-[8px] h-5 w-5">
        <path d="M10 0c3 2 6 2.500 9.500 2.500C19.500 11 17 17 10 20 3 17 .5 11 .5 2.500 4 2.500 7 2 10 0z" fill="#eceef0" />
        <circle cx="10" cy="9.500" r="6" fill="#3f78bd" stroke="#27548c" />
        <path d="M10 8v5M10 5.300v1.600" stroke="#fff" strokeWidth="1.800" />
      </svg>
      <svg viewBox="0 0 16 20" className="ml-[10px] h-5 w-4">
        <rect width="16" height="20" rx="8" fill="#3a6fae" />
        <path d="M4 6l8 8-4 3.500v-15L12 6l-8 8" fill="none" stroke="#12f23c" strokeWidth="1.600" />
      </svg>
      <svg viewBox="0 0 12 18" className="ml-[14px] h-[17px] w-[12px]" fill="none" stroke="#fff" strokeWidth="2">
        <path d="M4.300 11.500C3.500 9 1.500 8 1.500 5.500a4.500 4.500 0 0 1 9 0C10.500 8 8.500 9 7.700 11.500zM4 14h4M5 17h2" />
      </svg>
      <svg viewBox="0 0 20 14" className="ml-[11px] h-[14px] w-5">
        <rect width="20" height="14" fill="#f3f0ee" />
        <path d="M0 1h20M0 4.200h20M0 7.400h20M0 10.600h20M0 13.400h20" stroke="#cf5760" strokeWidth="1.400" />
        <rect width="10" height="7.500" fill="#4a5a8c" />
      </svg>
      <svg viewBox="0 0 16 14" className="ml-[11px] h-[13px] w-4" fill="none" strokeWidth="1.900">
        <path d="M1 4.500c4-4 10-4 14 0" stroke="#777" />
        <path d="M3.300 7.500c3-2.700 6.500-2.700 9.400 0" stroke="#fff" />
        <path d="M5.600 10c1.500-1.300 3.300-1.300 4.800 0" stroke="#fff" />
        <circle cx="8" cy="12.600" r="1.300" fill="#fff" />
      </svg>
      <svg viewBox="0 0 14 14" className="ml-[11px] h-[14px] w-[14px]">
        <path d="M4 12V2h9v8.500" fill="none" stroke="#fff" strokeWidth="1.800" />
        <path d="M4 1h9v3H4z" fill="#fff" />
        <circle cx="2.500" cy="12" r="2.200" fill="#fff" />
        <circle cx="11.200" cy="10.800" r="2.200" fill="#fff" />
      </svg>
      <span className="ml-[10px] w-[158px] text-[12.500px] font-semibold whitespace-nowrap text-[#f0f0f0]">Sunday May 12, 21:36 PM</span>
      <div className="h-[20px] w-[22px] rounded-[1px] border border-[#6d8b45] border-t-[4px] bg-[#8bb158]" />
    </div>
  </div>
);

const PageScrollbar = () => (
  <div className="flex w-[15px] shrink-0 flex-col items-center justify-between bg-[#f1f3f3] py-[6px]">
    <svg viewBox="0 0 8 4" className="h-1 w-[7px]" fill="#a3a5a5">
      <path d="M0 4h8L4 0z" />
    </svg>
    <svg viewBox="0 0 8 4" className="h-1 w-[7px]" fill="#a3a5a5">
      <path d="M0 0h8L4 4z" />
    </svg>
  </div>
);

export default function App() {
  return (
    <div className={`relative flex h-[1080px] w-[1920px] flex-col overflow-hidden bg-white ${UI}`}>
      <TabStrip />
      <AddressBar />
      <BookmarkBar />
      <div className="flex h-[935px] shrink-0">
        <div className="flex w-[1905px] flex-col">
          <StudioHeader />
          <div className="flex min-h-0 flex-1">
            <Rail />
            <Palette />
            <Canvas />
            <Properties />
          </div>
          <CommandBar />
        </div>
        <PageScrollbar />
      </div>
      <Taskbar />
      <Dialog />
    </div>
  );
}
